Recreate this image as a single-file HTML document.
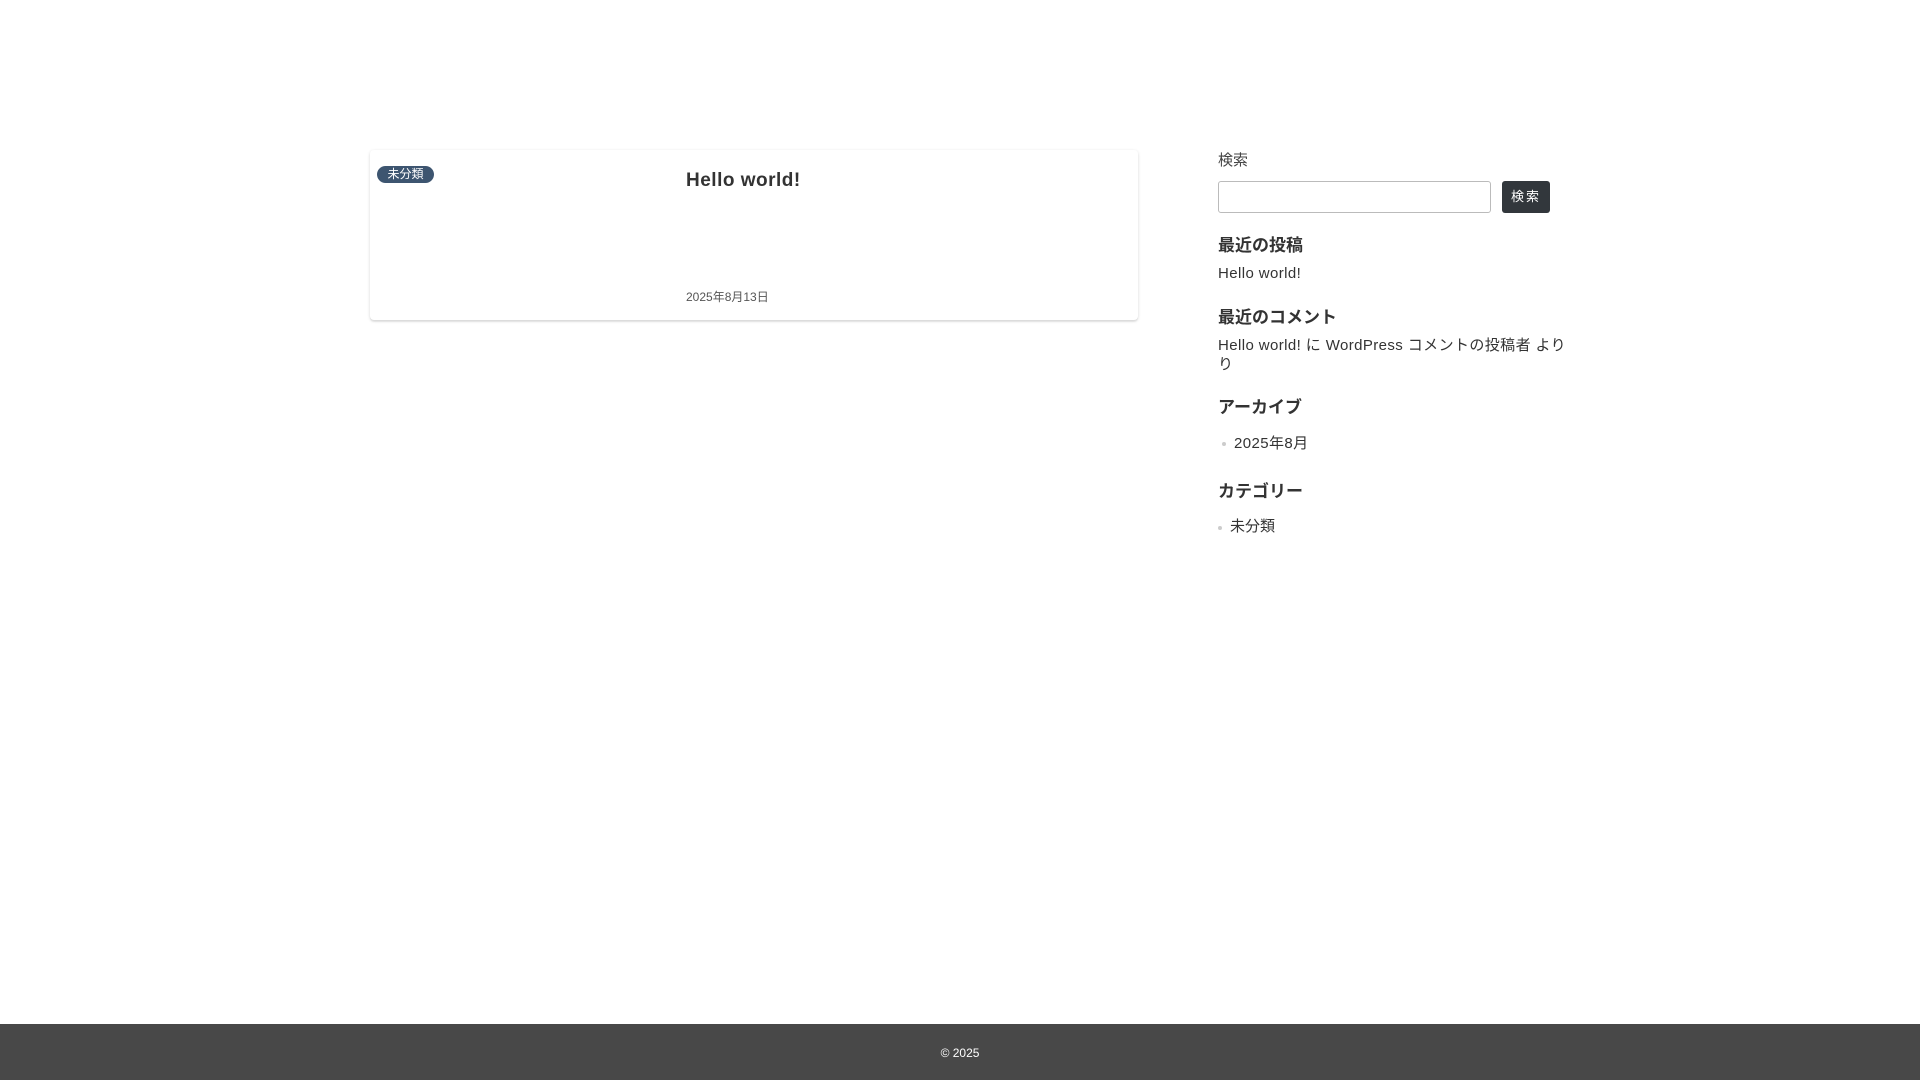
<!DOCTYPE html>
<html><head><meta charset="utf-8"><style>
*{box-sizing:border-box;margin:0;padding:0}
body{width:1920px;height:1080px;background:#fff;position:relative;font-family:"Liberation Sans","Noto Sans CJK JP",sans-serif;color:#333;overflow:hidden}
.a{position:absolute;white-space:nowrap;line-height:1}
.card{position:absolute;left:370px;top:150px;width:768px;height:170px;border-radius:4px;box-shadow:0 1px 3px rgba(0,0,0,.15),0 2px 1px rgba(0,0,0,.05)}
.badge{position:absolute;left:7px;top:16px;width:57px;height:17px;border-radius:9px;background:#3d5570;color:#fff;font-size:12px;line-height:17px;text-align:center}
h{font-weight:bold;font-size:17px}
.dot{position:absolute;width:4px;height:4px;border-radius:2px;background:#ccc}
</style></head><body>
<div class="card">
<div class="badge">未分類</div>
<div class="a" style="left:316px;top:21px;font-size:19px;font-weight:bold;letter-spacing:.5px">Hello world!</div>
<div class="a" style="left:316px;top:141px;font-size:12px;color:#555">2025年8月13日</div>
</div>
<div class="a" style="left:1218px;top:153px;font-size:15px;color:#444">検索</div>
<div style="position:absolute;left:1218px;top:181px;width:273px;height:32px;border:1px solid #bbb;border-radius:3px"></div>
<div style="position:absolute;left:1502px;top:181px;width:48px;height:32px;background:#32373c;border-radius:3px;color:#fff;font-size:13px;line-height:32px;text-align:center;letter-spacing:2px">検索</div>
<div class="a" style="left:1218px;top:237px;font-size:17px;font-weight:bold">最近の投稿</div>
<div class="a" style="left:1218px;top:266px;font-size:15px;letter-spacing:.4px">Hello world!</div>
<div class="a" style="left:1218px;top:309px;font-size:17px;font-weight:bold">最近のコメント</div>
<div class="a" style="left:1218px;top:338px;font-size:15px;letter-spacing:.4px">Hello world! に WordPress コメントの投稿者 より</div>
<div class="a" style="left:1218px;top:357px;font-size:15px">り</div>
<div class="a" style="left:1218px;top:399px;font-size:17px;font-weight:bold">アーカイブ</div>
<div class="dot" style="left:1222px;top:442px"></div>
<div class="a" style="left:1234px;top:436px;font-size:15px;letter-spacing:.4px">2025年8月</div>
<div class="a" style="left:1218px;top:483px;font-size:17px;font-weight:bold">カテゴリー</div>
<div class="dot" style="left:1218px;top:526px"></div>
<div class="a" style="left:1230px;top:519px;font-size:15px">未分類</div>
<div style="position:absolute;left:0;top:1024px;width:1920px;height:56px;background:#484848"></div>
<div class="a" style="left:0;width:1920px;text-align:center;top:1047px;font-size:12px;color:#fff">© 2025</div>
</body></html>
